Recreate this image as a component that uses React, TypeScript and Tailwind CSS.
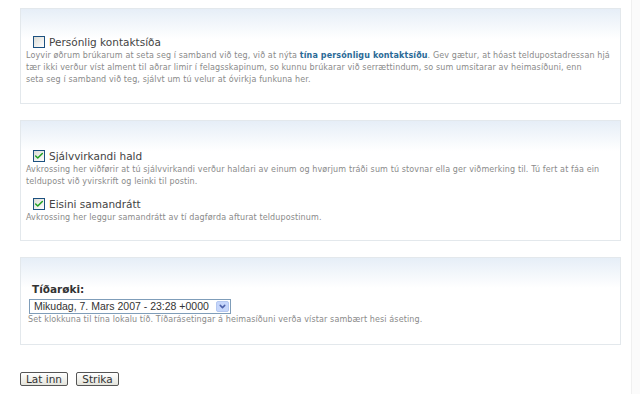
import { Check, ChevronDown } from 'lucide-react';

type Option = {
  id: string;
  label: string;
  checked: boolean;
  description: React.ReactNode;
};

const labelFont = { fontFamily: '"DejaVu Sans", Verdana, sans-serif' };
const smallFont = { fontFamily: '"DejaVu Sans", Verdana, sans-serif', letterSpacing: '0.12px' };
const selectFont = { fontFamily: '"Liberation Sans", Tahoma, sans-serif' };

function Checkbox({ checked }: { checked: boolean }) {
  return (
    <span className="flex h-[12px] w-[12px] shrink-0 items-center justify-center border border-[#1c5180] bg-gradient-to-br from-[#dcdcd6] to-white">
      {checked && <Check size={10} strokeWidth={3.5} className="text-[#21a121]" />}
    </span>
  );
}

function Fieldset({ className, children }: { className?: string; children: React.ReactNode }) {
  return (
    <div
      className={`border border-[#e3e8ec] bg-gradient-to-b from-[#e6eef7] via-white to-white ${className ?? ''}`}
      style={{ backgroundSize: '100% 60px', backgroundRepeat: 'no-repeat', backgroundColor: '#fff' }}
    >
      {children}
    </div>
  );
}

function OptionRow({ item }: { item: Option }) {
  return (
    <div>
      <label className="ml-[7px] flex items-center gap-[4px] text-[10.5px] leading-[14px] text-[#444]" style={labelFont}>
        <Checkbox checked={item.checked} />
        <span>{item.label}</span>
      </label>
      <p className="mt-[1px] whitespace-nowrap text-[8px] leading-[12px] text-[#8a8a8a]" style={smallFont}>
        {item.description}
      </p>
    </div>
  );
}

const contact: Option = {
  id: 'contact',
  label: 'Persónlig kontaktsíða',
  checked: false,
  description: (
    <>
      Loyvir øðrum brúkarum at seta seg í samband við teg, við at nýta{' '}
      <a className="font-bold text-[#2b6a97]">tína persónligu kontaktsíðu</a>. Gev gætur, at hóast teldupostadressan hjá
      <br />
      tær ikki verður víst alment til aðrar limir í felagsskapinum, so kunnu brúkarar við serrættindum, so sum umsitarar av
      heimasíðuni, enn
      <br />
      seta seg í samband við teg, sjálvt um tú velur at óvirkja funkuna her.
    </>
  ),
};

const notify: Option[] = [
  {
    id: 'auto',
    label: 'Sjálvvirkandi hald',
    checked: true,
    description: (
      <>
        Avkrossing her viðførir at tú sjálvvirkandi verður haldari av einum og hvørjum tráði sum tú stovnar ella ger
        viðmerking til. Tú fert at fáa ein
        <br />
        teldupost við yvirskrift og leinki til postin.
      </>
    ),
  },
  {
    id: 'summary',
    label: 'Eisini samandrátt',
    checked: true,
    description: 'Avkrossing her leggur samandrátt av tí dagførda afturat teldupostinum.',
  },
];

export default function App() {
  return (
    <div className="relative h-[394px] w-[640px] overflow-hidden bg-white">
      <div className="absolute right-0 top-0 h-full w-[9px] border-l border-[#f0f0f0] bg-[#fbfbfb]" />
      <div className="w-[621px] pl-[20px] pt-[8px]">
        <Fieldset className="h-[96px] pl-[5px] pr-[6px] pt-[26px]">
          <OptionRow item={contact} />
        </Fieldset>

        <Fieldset className="mt-[16px] h-[121px] pl-[5px] pr-[6px] pt-[28px]">
          <div className="flex flex-col gap-[9px]">
            {notify.map(item => (
              <OptionRow key={item.id} item={item} />
            ))}
          </div>
        </Fieldset>

        <Fieldset className="mt-[16px] h-[88px] pl-[7px] pr-[6px] pt-[24px]">
          <div className="ml-[4px] text-[10.5px] font-bold leading-[14px] text-[#333]" style={labelFont}>
            Tíðarøki:
          </div>
          <div
            className="ml-[1px] mt-[3px] flex h-[15px] w-[202px] items-center border border-[#7f9db9] bg-white text-[10.5px] leading-[13px] text-[#333]"
            style={selectFont}
          >
            <span className="flex-1 whitespace-nowrap pl-[4px]">Mikudag, 7. Mars 2007 - 23:28 +0000</span>
            <span className="mr-[1px] flex h-[11px] w-[13px] items-center justify-center rounded-[2px] border border-[#b5c8f0] bg-[#c6d6fb]">
              <ChevronDown size={9} strokeWidth={4} className="text-[#4d61a9]" />
            </span>
          </div>
          <p className="text-[8px] leading-[12px] text-[#8a8a8a]" style={smallFont}>
            Set klokkuna til tína lokalu tíð. Tíðarásetingar á heimasíðuni verða vístar sambært hesi áseting.
          </p>
        </Fieldset>

        <div className="mt-[27px] flex gap-[8px]" style={labelFont}>
          <button className="h-[14px] w-[48px] rounded-[2px] border border-[#555] bg-gradient-to-b from-white to-[#e4e4dc] text-[10.5px] leading-[12px] text-[#333]">
            Lat inn
          </button>
          <button className="h-[14px] w-[43px] rounded-[2px] border border-[#555] bg-gradient-to-b from-white to-[#e4e4dc] text-[10.5px] leading-[12px] text-[#333]">
            Strika
          </button>
        </div>
      </div>
    </div>
  );
}
